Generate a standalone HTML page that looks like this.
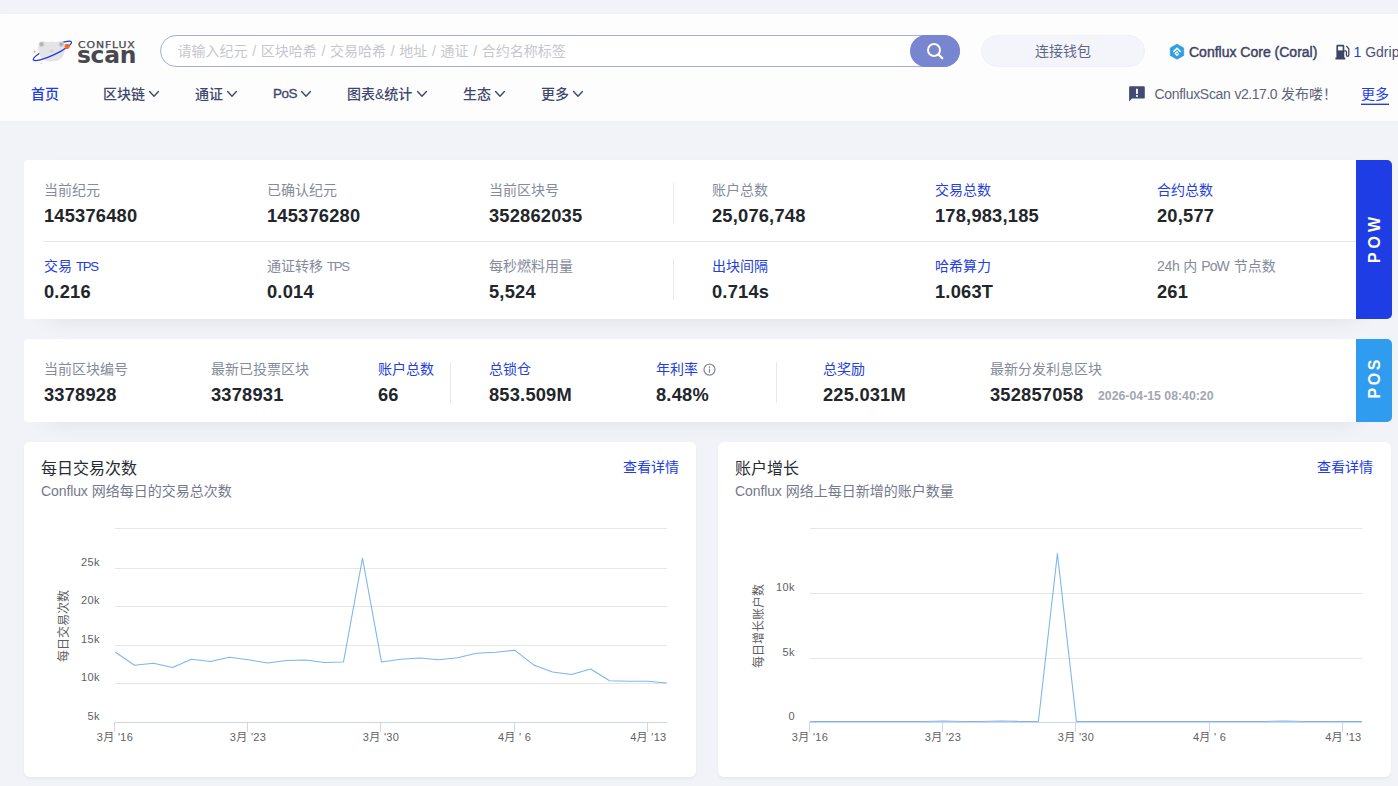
<!DOCTYPE html>
<html lang="zh-CN">
<head>
<meta charset="utf-8">
<title>ConfluxScan</title>
<style>
*{box-sizing:border-box;margin:0;padding:0}
html,body{width:1398px;height:786px;overflow:hidden}
body{background:#f2f3f8;font-family:"Liberation Sans","Noto Sans CJK SC",sans-serif;color:#282d30;position:relative}
.abs{position:absolute;white-space:nowrap}
#header{position:absolute;left:0;top:14px;width:1398px;height:107px;background:#fdfdfd;box-shadow:0 1px 3px rgba(20,27,50,0.025)}
#search{position:absolute;left:160px;top:35px;width:800px;height:32px;border:1px solid #a6add8;border-radius:16px;background:#fff}
#search .ph{position:absolute;word-spacing:0.8px;left:16.5px;top:0;line-height:30px;font-size:14px;color:#c6c7cc;white-space:nowrap}
#sbtn{position:absolute;left:910px;top:35px;width:50px;height:32px;border-radius:16px;background:#7885d1}
#wallet{position:absolute;left:981px;top:35px;width:164px;height:32px;border-radius:16px;background:#f4f5fa;border:1px solid #f0f1f7;text-align:center;line-height:30px;font-size:14px;color:#5f6788}
.nav{position:absolute;top:83px;line-height:22px;font-size:14px;color:#3f476d;white-space:nowrap;font-weight:500}
.nav svg{position:absolute;top:8px;right:-13px}
.card{position:absolute;background:#fff;border-radius:5px;box-shadow:12px 8px 24px -12px rgba(20,27,50,0.12)}
.lbl{position:absolute;font-size:14px;line-height:20px;color:#858a9c;white-space:nowrap}
.lbl.b{color:#2440dc}
.lbl i{font-style:normal;font-size:14px}
.val{position:absolute;letter-spacing:0.2px;font-size:18.3px;line-height:24px;font-weight:bold;color:#22262b;white-space:nowrap}
.vd{position:absolute;width:1px;background:#e8e8e8}
.tab{position:absolute;left:1356px;width:36px;color:#fff;font-weight:bold;font-size:16px;border-radius:0 5px 5px 0}
.tab span{position:absolute;left:18.5px;transform:translate(-50%,-50%) rotate(-90deg);white-space:nowrap;line-height:16px}
.ct{position:absolute;font-size:16px;line-height:22px;color:#262b33;white-space:nowrap}
.cs{position:absolute;font-size:14px;line-height:20px;color:#74798c;white-space:nowrap}
.cs i{font-style:normal;font-size:14px;letter-spacing:-0.1px}
.cl{position:absolute;font-size:14px;line-height:20px;color:#1e3de4;white-space:nowrap}
svg text{font-family:"Liberation Sans","Noto Sans CJK SC",sans-serif}
</style>
</head>
<body>
<div id="header"></div>

<!-- logo -->
<div id="logo" class="abs" style="left:30px;top:36px;width:108px;height:30px">
<svg class="abs" style="left:0;top:0" width="46" height="30" viewBox="30 36 46 30">
<defs><radialGradient id="ear" cx="0.5" cy="0.5" r="0.5"><stop offset="0" stop-color="#a3a3a6"/><stop offset="0.55" stop-color="#bcbcbf"/><stop offset="1" stop-color="#e0e0e2"/></radialGradient>
<radialGradient id="nose" cx="0.5" cy="0.5" r="0.5"><stop offset="0" stop-color="#cfcfd2"/><stop offset="1" stop-color="#e4e4e6"/></radialGradient>
<clipPath id="cv"><path d="M30 36 H76 V40.9 L30 62.7 Z"/></clipPath></defs>
<path id="hd" d="M38.6 50 Q38 43.2 41.4 41.8 Q44 40.9 46.6 42.3 Q51.6 41.1 56.6 42.3 Q59.4 40.9 61.9 41.8 Q65.4 43.4 64.8 50 Q64.6 57.2 58 60.5 Q51.6 62.7 45 60.5 Q38.8 57.2 38.6 50Z" fill="#e4e4e6"/>
<ellipse cx="52.4" cy="50.9" rx="21" ry="4.2" transform="rotate(-25.3 52.4 50.9)" fill="none" stroke="#1e3de4" stroke-width="1.3"/>
<path clip-path="url(#cv)" d="M38.6 50 Q38 43.2 41.4 41.8 Q44 40.9 46.6 42.3 Q51.6 41.1 56.6 42.3 Q59.4 40.9 61.9 41.8 Q65.4 43.4 64.8 50 Q64.6 57.2 58 60.5 Q51.6 62.7 45 60.5 Q38.8 57.2 38.6 50Z" fill="#e4e4e6"/>
<circle cx="41.6" cy="44.3" r="2.9" fill="url(#ear)"/><circle cx="61.3" cy="44.3" r="2.9" fill="url(#ear)"/>
<ellipse cx="51.6" cy="51" rx="3.2" ry="2.4" fill="url(#nose)"/>
<circle cx="67.1" cy="46.3" r="2.6" fill="#f76a1e"/>
<circle cx="34.7" cy="51.7" r="1" fill="#f9a23c"/><circle cx="41.2" cy="63.4" r="0.75" fill="#fbd64a"/>
</svg>
<div class="abs" id="lg1" style="left:47.6px;top:4px;font-family:'DejaVu Sans','Liberation Sans',sans-serif;font-size:9px;line-height:10px;font-weight:normal;letter-spacing:0.75px;color:#48484d;-webkit-text-stroke:0.25px #48484d;transform-origin:0 0;transform:scaleX(1.205)">CONFLUX</div>
<div class="abs" id="lg2" style="left:47px;top:7.4px;font-family:'DejaVu Sans','Liberation Sans',sans-serif;font-size:23.4px;line-height:24px;font-weight:bold;color:#48484d;letter-spacing:-0.3px;transform-origin:0 0;transform:scaleX(1.0)">scan</div>
</div>

<div id="search"><span class="ph">请输入纪元 / 区块哈希 / 交易哈希 / 地址 / 通证 / 合约名称标签</span></div>
<div id="sbtn">
<svg width="50" height="32" viewBox="0 0 50 32"><circle cx="24" cy="15" r="6" fill="none" stroke="#fff" stroke-width="2"/><path d="M28.4 19.4 L32.3 23.3" stroke="#fff" stroke-width="2.2" stroke-linecap="round"/></svg>
</div>
<div id="wallet">连接钱包</div>

<!-- nav -->
<div class="nav" style="left:31px;color:#1e3de4">首页</div>
<div class="nav" style="left:103px">区块链</div>
<div class="nav" style="left:195px">通证</div>
<div class="nav" style="left:273px;font-size:13.5px;letter-spacing:-0.55px;font-weight:normal;-webkit-text-stroke:0.35px #3f476d;color:#3f476d">PoS</div>
<div class="nav" style="left:347px">图表&amp;统计</div>
<div class="nav" style="left:463px">生态</div>
<div class="nav" style="left:541px">更多</div>

<svg class="abs" style="left:148.2px;top:89px" width="12" height="10" viewBox="0 0 12 10"><path d="M1.6 2.6 L6 7.2 L10.4 2.6" fill="none" stroke="#3f476d" stroke-width="1.4" stroke-linecap="round" stroke-linejoin="round"/></svg>
<svg class="abs" style="left:225.8px;top:89px" width="12" height="10" viewBox="0 0 12 10"><path d="M1.6 2.6 L6 7.2 L10.4 2.6" fill="none" stroke="#3f476d" stroke-width="1.4" stroke-linecap="round" stroke-linejoin="round"/></svg>
<svg class="abs" style="left:299.8px;top:89px" width="12" height="10" viewBox="0 0 12 10"><path d="M1.6 2.6 L6 7.2 L10.4 2.6" fill="none" stroke="#3f476d" stroke-width="1.4" stroke-linecap="round" stroke-linejoin="round"/></svg>
<svg class="abs" style="left:416.2px;top:89px" width="12" height="10" viewBox="0 0 12 10"><path d="M1.6 2.6 L6 7.2 L10.4 2.6" fill="none" stroke="#3f476d" stroke-width="1.4" stroke-linecap="round" stroke-linejoin="round"/></svg>
<svg class="abs" style="left:494px;top:89px" width="12" height="10" viewBox="0 0 12 10"><path d="M1.6 2.6 L6 7.2 L10.4 2.6" fill="none" stroke="#3f476d" stroke-width="1.4" stroke-linecap="round" stroke-linejoin="round"/></svg>
<svg class="abs" style="left:572px;top:89px" width="12" height="10" viewBox="0 0 12 10"><path d="M1.6 2.6 L6 7.2 L10.4 2.6" fill="none" stroke="#3f476d" stroke-width="1.4" stroke-linecap="round" stroke-linejoin="round"/></svg>

<!-- header right -->
<svg class="abs" style="left:1169px;top:44px" width="16" height="16" viewBox="0 0 16 16"><path d="M8 0.2 L14.7 4 V11.4 L8 15.2 L1.3 11.4 V4 Z" fill="#2f9fe2" stroke="#2f9fe2" stroke-width="0.8" stroke-linejoin="round"/><path d="M4.3 7.9 L8 4.4 L11.7 7.9" fill="none" stroke="#fff" stroke-width="1.5"/><path d="M8.9 8.6 L8 7.8 L6.2 9.5 L8 11.3 L9.8 9.5" fill="none" stroke="#fff" stroke-width="1.3"/></svg>
<div class="abs" id="netname" style="left:1189px;top:42px;line-height:20px;font-size:14px;color:#3d4468;font-weight:normal;-webkit-text-stroke:0.45px #3d4468;letter-spacing:0px">Conflux Core (Coral)</div>
<svg class="abs" style="left:1335px;top:43.6px" width="16.2" height="16.2" viewBox="0 0 15 15"><path d="M1.3 1.6 Q1.3 0.6 2.3 0.6 H7.6 Q8.6 0.6 8.6 1.6 V12.6 H1.3 Z M0.4 12.6 H9.5 V14.4 H0.4 Z" fill="#3d4468"/><rect x="2.8" y="2.3" width="4.3" height="3.6" fill="#fff"/><path d="M8.6 6.4 H9.8 Q10.6 6.4 10.6 7.2 V10.2 Q10.6 11.4 11.7 11.4 Q12.8 11.4 12.8 10.2 V4.6 L10.9 2.2" fill="none" stroke="#3d4468" stroke-width="1.2" stroke-linecap="round" stroke-linejoin="round"/></svg>
<div class="abs" style="left:1353.5px;top:42px;line-height:20px;font-size:14px;color:#4a5178"><span style="color:#2440dc">1</span> Gdrip</div>
<svg class="abs" style="left:1128px;top:85px" width="18" height="18" viewBox="0 0 18 18"><path d="M2.2 1.2 H15.6 Q16.8 1.2 16.8 2.4 V12.4 Q16.8 13.6 15.6 13.6 H4 L1.1 16.5 V2.4 Q1.1 1.2 2.2 1.2 Z" fill="#434a74"/><rect x="8" y="3.8" width="1.9" height="5.1" fill="#fff"/><rect x="8" y="10.1" width="1.9" height="1.7" fill="#fff"/></svg>
<div class="abs" id="notice" style="left:1154.5px;top:83px;line-height:22px;font-size:14px;color:#5f6476"><span style="letter-spacing:-0.3px">ConfluxScan</span> <span style="letter-spacing:-0.47px">v2.17.0</span> 发布喽<span id="excl">！</span></div>
<div class="abs" style="left:1361px;top:83px;line-height:22px;font-size:14px;color:#1e3de4">更多</div>
<div class="abs" style="left:1361px;top:104px;width:28px;height:1px;background:#1e3de4;box-shadow:0 -1px 0 rgba(30,61,228,0.4)"></div>

<!-- POW card -->
<div class="card" style="left:24px;top:160px;width:1332px;height:159px;border-radius:4px 0 0 4px"></div>
<div class="tab" style="top:160px;height:159px;background:#1e3de4"><span style="top:79.7px;letter-spacing:3.9px;padding-left:3.9px">POW</span></div>
<div class="abs" style="left:43px;top:241px;width:1313px;height:1px;background:#e8e8e8"></div>
<div class="vd" style="left:673px;top:183px;height:41px"></div>
<div class="vd" style="left:673px;top:259px;height:41px"></div>

<!-- POS card -->
<div class="card" style="left:24px;top:339px;width:1332px;height:83px;border-radius:4px 0 0 4px"></div>
<div class="tab" style="top:339px;height:83px;background:#2f9cf0"><span style="top:39.5px;letter-spacing:2.6px;padding-left:2.6px">POS</span></div>
<div class="vd" style="left:450px;top:362px;height:41px"></div>
<div class="vd" style="left:776px;top:362px;height:41px"></div>

<!-- POW stats -->
<div class="lbl" style="left:44px;top:180px">当前纪元</div><div class="val" style="left:44px;top:204px">145376480</div>
<div class="lbl" style="left:267px;top:180px">已确认纪元</div><div class="val" style="left:267px;top:204px">145376280</div>
<div class="lbl" style="left:489px;top:180px">当前区块号</div><div class="val" style="left:489px;top:204px">352862035</div>
<div class="lbl" style="left:712px;top:180px">账户总数</div><div class="val" style="left:712px;top:204px">25,076,748</div>
<div class="lbl b" style="left:935px;top:180px">交易总数</div><div class="val" style="left:935px;top:204px">178,983,185</div>
<div class="lbl b" style="left:1157px;top:180px">合约总数</div><div class="val" style="left:1157px;top:204px">20,577</div>
<div class="lbl b" style="left:44px;top:256px">交易 <i style="letter-spacing:-1.25px;font-size:13.2px">TPS</i></div><div class="val" style="left:44px;top:280px">0.216</div>
<div class="lbl" style="left:267px;top:256px">通证转移 <i style="letter-spacing:-1.25px;font-size:13.2px">TPS</i></div><div class="val" style="left:267px;top:280px">0.014</div>
<div class="lbl" style="left:489px;top:256px">每秒燃料用量</div><div class="val" style="left:489px;top:280px">5,524</div>
<div class="lbl b" style="left:712px;top:256px">出块间隔</div><div class="val" style="left:712px;top:280px">0.714s</div>
<div class="lbl b" style="left:935px;top:256px">哈希算力</div><div class="val" style="left:935px;top:280px">1.063T</div>
<div class="lbl" style="left:1157px;top:256px"><i style="letter-spacing:-0.3px">24h</i> 内 <i style="letter-spacing:-0.9px;margin-right:0.9px">PoW</i> 节点数</div><div class="val" style="left:1157px;top:280px">261</div>
<!-- POS stats -->
<div class="lbl" style="left:44px;top:359px">当前区块编号</div><div class="val" style="left:44px;top:383px">3378928</div>
<div class="lbl" style="left:211px;top:359px">最新已投票区块</div><div class="val" style="left:211px;top:383px">3378931</div>
<div class="lbl b" style="left:378px;top:359px">账户总数</div><div class="val" style="left:378px;top:383px">66</div>
<div class="lbl b" style="left:489px;top:359px">总锁仓</div><div class="val" style="left:489px;top:383px">853.509M</div>
<div class="lbl b" style="left:656px;top:359px">年利率</div><div class="val" style="left:656px;top:383px">8.48%</div>
<div class="lbl b" style="left:823px;top:359px">总奖励</div><div class="val" style="left:823px;top:383px">225.031M</div>
<div class="lbl" style="left:990px;top:359px">最新分发利息区块</div><div class="val" style="left:990px;top:383px">352857058</div>

<svg class="abs" style="left:702px;top:362px" width="15" height="15" viewBox="0 0 15 15"><circle cx="7.5" cy="7.6" r="5.5" fill="none" stroke="#878b98" stroke-width="1.25"/><circle cx="7.5" cy="5" r="0.85" fill="#878b98"/><rect x="6.9" y="6.6" width="1.2" height="4.2" fill="#878b98"/></svg>
<div class="abs" style="left:1098px;top:388px;font-size:12.3px;line-height:16px;font-weight:bold;color:#a3a6b2">2026-04-15 08:40:20</div>

<!-- chart cards -->
<div class="card" style="left:24px;top:442px;width:672px;height:335px;border-radius:6px;box-shadow:0 2px 3px rgba(20,27,50,0.045)"></div>
<div class="card" style="left:718px;top:442px;width:673px;height:335px;border-radius:6px;box-shadow:0 2px 3px rgba(20,27,50,0.045)"></div>


<div class="ct" style="left:41px;top:458px">每日交易次数</div>
<div class="cs" style="left:41px;top:481px"><i>Conflux</i> 网络每日的交易总次数</div>
<div class="cl" style="left:623px;top:457px">查看详情</div>
<div class="ct" style="left:735px;top:458px">账户增长</div>
<div class="cs" style="left:735px;top:481px"><i>Conflux</i> 网络上每日新增的账户数量</div>
<div class="cl" style="left:1317px;top:457px">查看详情</div>
<svg class="abs" style="left:0;top:0" width="1398" height="786" viewBox="0 0 1398 786">
<g stroke="#e6e6e6" stroke-width="1" shape-rendering="crispEdges">
<path d="M115 528.5 H667"/>
<path d="M115 568.5 H667"/>
<path d="M115 606.5 H667"/>
<path d="M115 645.5 H667"/>
<path d="M115 683.5 H667"/>
<path d="M810 528.5 H1362"/>
<path d="M810 593.5 H1362"/>
<path d="M810 658.5 H1362"/>
</g>
<g stroke="#ccd6eb" stroke-width="1" fill="none" shape-rendering="crispEdges">
<path d="M114 722.5 H667"/><path d="M809 722.5 H1362"/>
<path d="M114.5 722 V732"/>
<path d="M247.5 722 V732"/>
<path d="M380.5 722 V732"/>
<path d="M514.5 722 V732"/>
<path d="M647.5 722 V732"/>
<path d="M809.5 722 V732"/>
<path d="M942.5 722 V732"/>
<path d="M1075.5 722 V732"/>
<path d="M1209.5 722 V732"/>
<path d="M1342.5 722 V732"/>
</g>
<polyline points="115.5,652.2 134.5,665.2 153.5,663.2 172.5,667.5 191.5,659.3 210.5,661.6 229.5,657.3 248.5,659.8 267.5,662.9 286.5,660.6 305.5,660.1 324.5,662.4 343.5,661.9 362.5,558.2 381.5,662.1 400.6,659.3 419.6,658.1 438.6,659.8 457.6,657.8 476.6,653.2 495.6,652.2 514.6,650.2 533.6,664.9 552.6,672.1 571.6,674.4 590.6,669.0 609.6,680.7 628.6,681.2 647.6,681.2 666.6,683.0" fill="none" stroke="#7cb5ec" stroke-width="1.05" stroke-linejoin="round" stroke-linecap="round"/>
<polyline points="810.4,721.4 829.4,721.4 848.4,721.4 867.4,721.4 886.4,721.4 905.4,721.4 924.4,721.4 943.4,721.0 962.4,721.4 981.4,721.4 1000.4,721.1 1019.4,721.4 1038.4,721.4 1057.4,553.6 1076.4,721.4 1095.5,721.4 1114.5,721.4 1133.5,721.4 1152.5,721.4 1171.5,721.4 1190.5,721.4 1209.5,721.4 1228.5,721.4 1247.5,721.4 1266.5,721.4 1285.5,721.0 1304.5,721.4 1323.5,721.4 1342.5,721.4 1361.5,721.4" fill="none" stroke="#7cb5ec" stroke-width="1.05" stroke-linejoin="round" stroke-linecap="round"/>
<g font-size="11" fill="#5f5f5f" text-anchor="end" letter-spacing="0.45">
<text x="100" y="566">25k</text>
<text x="100" y="604">20k</text>
<text x="100" y="643">15k</text>
<text x="100" y="681">10k</text>
<text x="100" y="720">5k</text>
<text x="795" y="591">10k</text>
<text x="795" y="656">5k</text>
<text x="795" y="720">0</text>
</g>
<g font-size="11" fill="#5f5f5f" text-anchor="middle" letter-spacing="0.3">
<text x="115" y="741">3月 '16</text>
<text x="248" y="741">3月 '23</text>
<text x="381" y="741">3月 '30</text>
<text x="514.5" y="741">4月 ' 6</text>
<text x="810" y="741">3月 '16</text>
<text x="943" y="741">3月 '23</text>
<text x="1076" y="741">3月 '30</text>
<text x="1209.5" y="741">4月 ' 6</text>
<text x="666.5" y="741" text-anchor="end">4月 '13</text>
<text x="1361.5" y="741" text-anchor="end">4月 '13</text>
</g>
<g font-size="12" fill="#5f5f5f" text-anchor="middle">
<text transform="translate(67.5,626) rotate(-90)">每日交易次数</text>
<text transform="translate(762.5,626) rotate(-90)">每日增长账户数</text>
</g>
</svg>
</body>
</html>
